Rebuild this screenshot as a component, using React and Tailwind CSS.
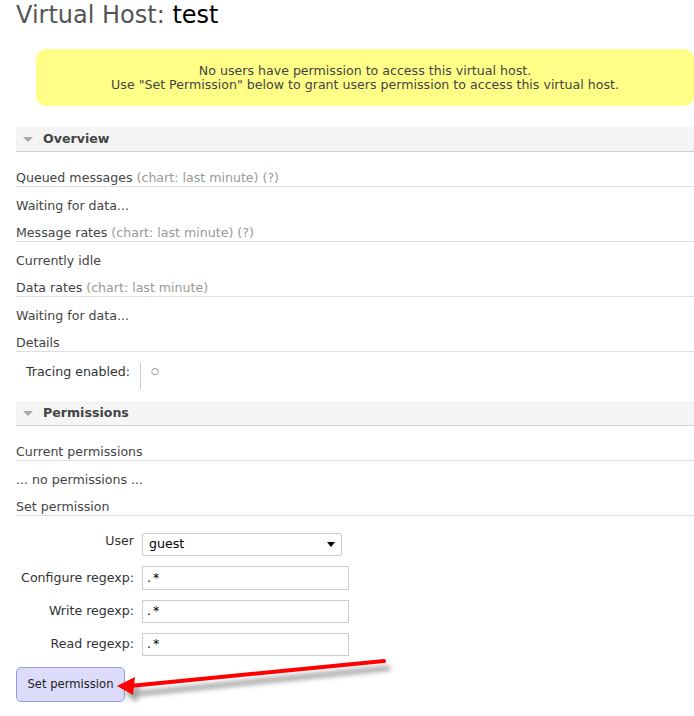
import React from "react";

function Heading({ children, className = "" }) {
  return (
    <div className={"h-[19px] leading-[19px] border-b border-[#dddddd] " + className}>
      {children}
    </div>
  );
}

function Para({ children, className = "" }) {
  return <div className={"h-[18px] leading-[18px] " + className}>{children}</div>;
}

function SectionHeader({ children, className = "" }) {
  return (
    <div className={"h-[25px] bg-[#f5f5f5] border-b border-[#d0d0d0] flex items-center " + className}>
      <span className="ml-[7px] mr-[10px] w-0 h-0 border-l-[5px] border-r-[5px] border-t-[5px] border-l-transparent border-r-transparent border-t-[#aaaaaa]" />
      <span className="font-bold text-[#444444]">{children}</span>
    </div>
  );
}

export default function App() {
  return (
    <div
      className="relative w-[694px] h-[716px] bg-white text-[12.6px] text-[#444444] pl-4 overflow-hidden"
      style={{ fontFamily: '"DejaVu Sans", Verdana, sans-serif' }}
    >
      <h1 className="text-[24px] leading-[30px] h-[32px] text-[#555555] font-normal">
        Virtual Host: <span className="text-black">test</span>
      </h1>
      <div className="ml-5 mt-[17px] h-[57px] bg-[#ffff88] rounded-[10px] flex flex-col items-center justify-center leading-[14px] text-[#444444]">
        <div>No users have permission to access this virtual host.</div>
        <div>Use "Set Permission" below to grant users permission to access this virtual host.</div>
      </div>

      <SectionHeader className="mt-[21px]">Overview</SectionHeader>
      <Heading className="mt-4">
        Queued messages <span className="text-[#999999]">(chart: last minute) (?)</span>
      </Heading>
      <Para className="mt-[10px]">Waiting for data...</Para>
      <Heading className="mt-2">
        Message rates <span className="text-[#999999]">(chart: last minute) (?)</span>
      </Heading>
      <Para className="mt-[10px]">Currently idle</Para>
      <Heading className="mt-2">
        Data rates <span className="text-[#999999]">(chart: last minute)</span>
      </Heading>
      <Para className="mt-[10px]">Waiting for data...</Para>
      <Heading className="mt-2">Details</Heading>
      <div className="mt-[11px] flex items-stretch h-[26px]">
        <div className="pl-[10px] pr-[10px] pt-[1px] leading-[16px] text-[#333333]">Tracing enabled:</div>
        <div className="border-l border-[#cccccc] pl-[10px] pt-0 leading-[16px] text-[9px] text-[#555555]">○</div>
      </div>

      <SectionHeader className="mt-[12px]">Permissions</SectionHeader>
      <Heading className="mt-4">Current permissions</Heading>
      <Para className="mt-[10px]">... no permissions ...</Para>
      <Heading className="mt-2">Set permission</Heading>

      <div className="mt-[17px] flex flex-col gap-[10px] text-[#333333]">
        <div className="flex items-start">
          <div className="w-[118px] text-right leading-[16px] pt-0">User</div>
          <div className="ml-2 w-[200px] h-[23px] border border-[#cccccc] rounded-[2px] bg-white flex items-center justify-between pl-[6px] pr-[6px]">
            <span className="text-black">guest</span>
            <span className="w-0 h-0 border-l-[4px] border-r-[4px] border-t-[5px] border-l-transparent border-r-transparent border-t-black" />
          </div>
        </div>
        <div className="flex items-center">
          <div className="w-[118px] text-right">Configure regexp:</div>
          <div className="ml-2 w-[207px] h-[24px] border border-[#cccccc] bg-white flex items-center pl-[4px] text-black tracking-[2px]">.*</div>
        </div>
        <div className="flex items-center">
          <div className="w-[118px] text-right">Write regexp:</div>
          <div className="ml-2 w-[207px] h-[23px] border border-[#cccccc] bg-white flex items-center pl-[4px] text-black tracking-[2px]">.*</div>
        </div>
        <div className="flex items-center">
          <div className="w-[118px] text-right">Read regexp:</div>
          <div className="ml-2 w-[207px] h-[23px] border border-[#cccccc] bg-white flex items-center pl-[4px] text-black tracking-[2px]">.*</div>
        </div>
      </div>
      <button className="block mt-[11px] w-[109px] h-[35px] bg-[#dcdcfa] border border-[#9a9ae0] rounded-[5px] text-[#222222] text-[11.6px]">
        Set permission
      </button>

      <svg className="absolute left-0 top-0 pointer-events-none" width="694" height="716">
        <defs>
          <filter id="sh" x="-10%" y="-50%" width="120%" height="200%">
            <feGaussianBlur stdDeviation="2.5" />
          </filter>
        </defs>
        <g filter="url(#sh)" opacity="0.55">
          <line x1="390" y1="668" x2="134" y2="694" stroke="#555" strokeWidth="5" />
          <polygon points="124,693 140,684 137,702" fill="#555" />
        </g>
        <line x1="384" y1="661" x2="130" y2="686" stroke="#ff0000" strokeWidth="4" strokeLinecap="round" />
        <polygon points="117,686 135,677 133,695" fill="#ff0000" />
      </svg>
    </div>
  );
}
